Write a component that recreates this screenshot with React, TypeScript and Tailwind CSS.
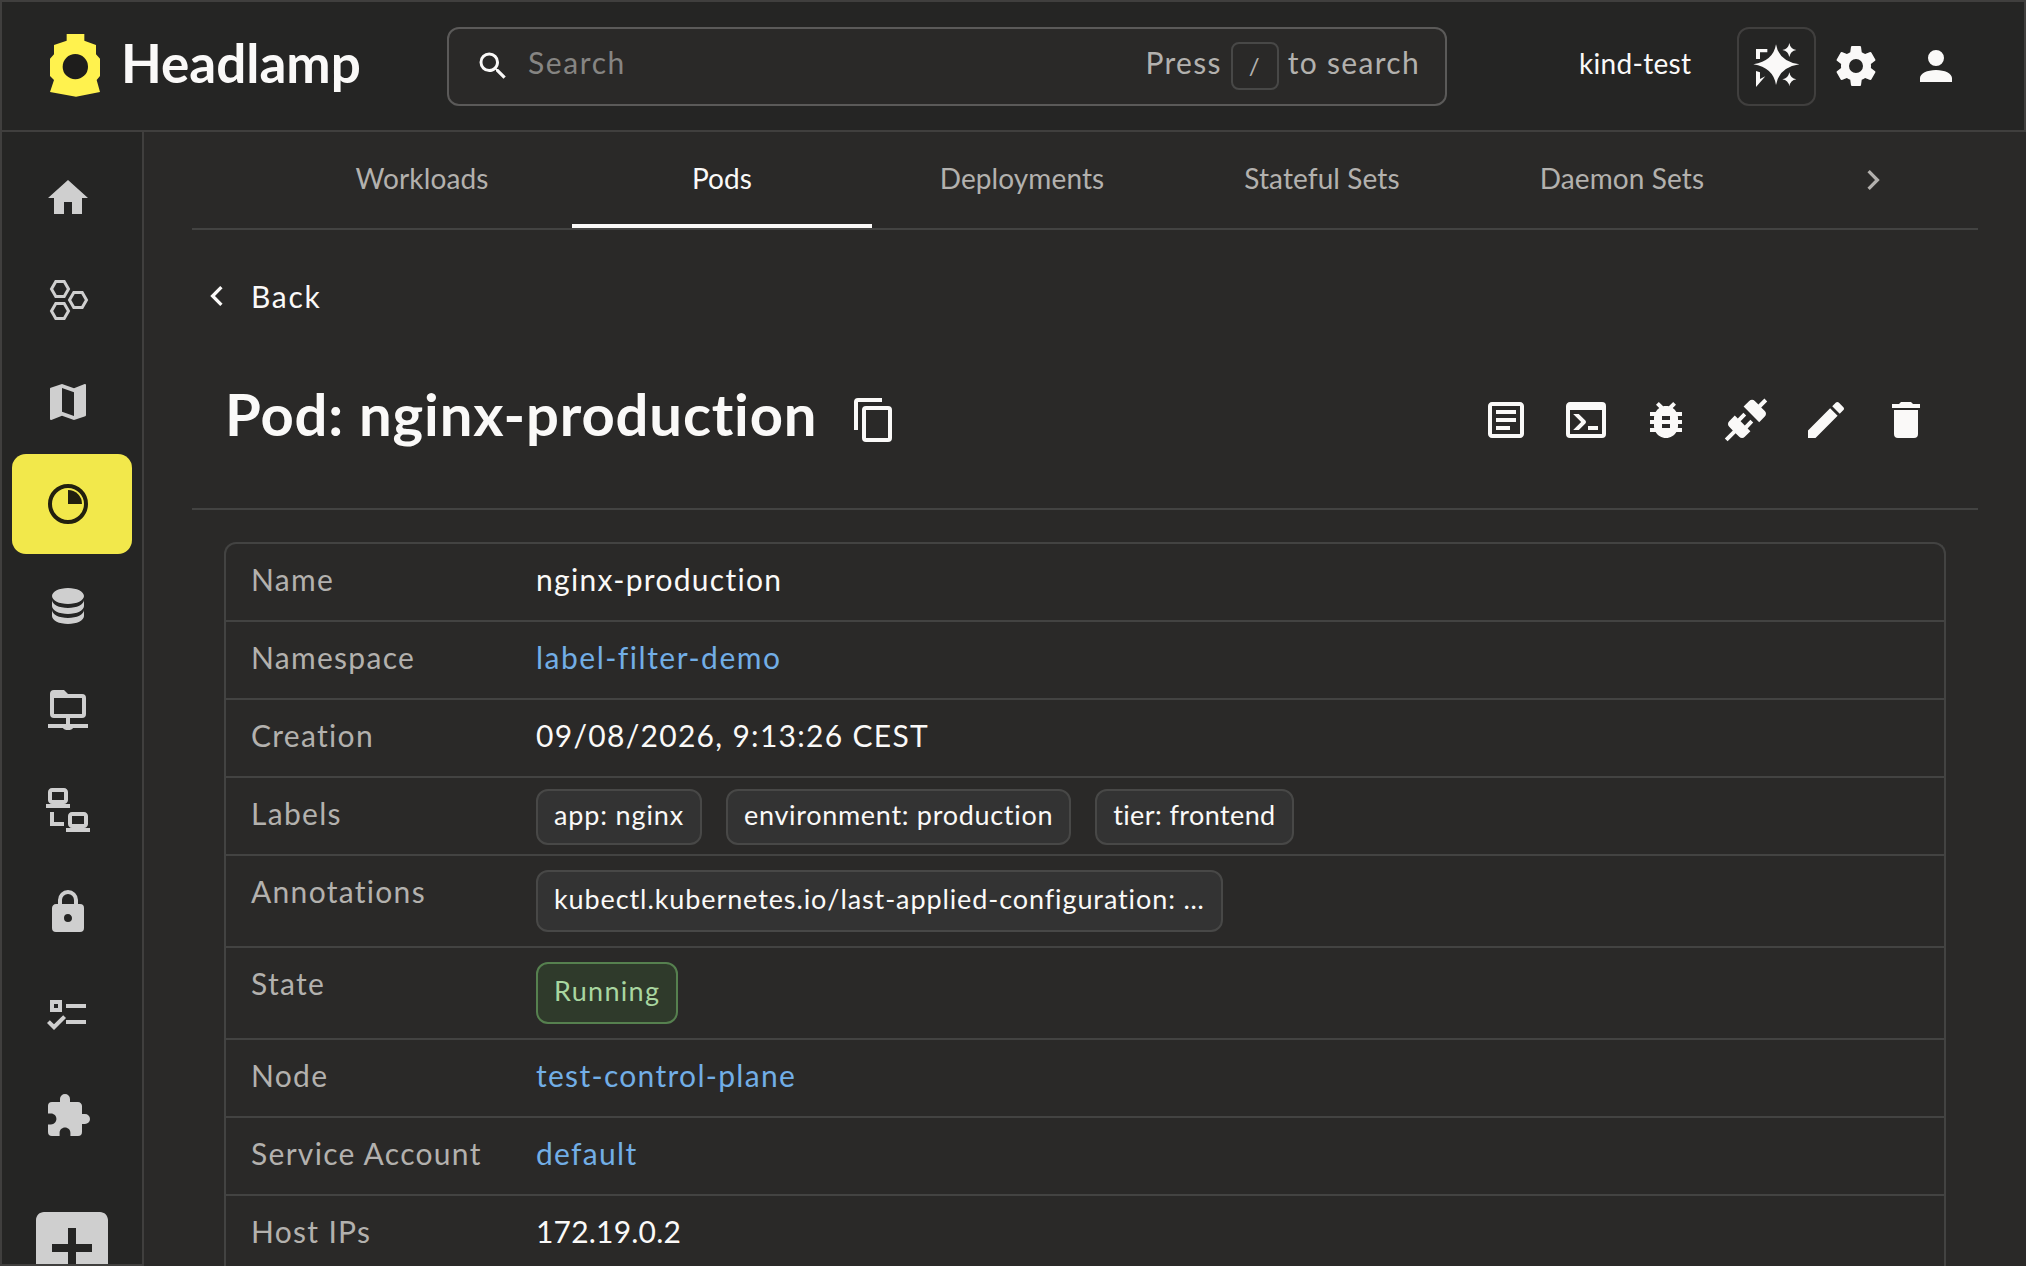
import React from "react";

const FONT = "font-['Lato','Noto_Sans',sans-serif]";

function Mdi({ d, className = "" }: { d: string; className?: string }) {
  return (
    <svg viewBox="0 0 24 24" className={`h-12 w-12 shrink-0 fill-current ${className}`}>
      <path d={d} />
    </svg>
  );
}

const ICONS = {
  home: "M10,20V14H14V20H19V12H22L12,3L2,12H5V20H10Z",
  map: "M15,19L9,16.89V5L15,7.11M20.5,3C20.44,3 20.39,3 20.34,3L15,5.1L9,3L3.36,4.9C3.15,4.97 3,5.15 3,5.38V20.5A0.5,0.5 0 0,0 3.5,21C3.55,21 3.61,21 3.66,20.97L9,18.9L15,21L20.64,19.1C20.85,19 21,18.85 21,18.62V3.5A0.5,0.5 0 0,0 20.5,3Z",
  database:
    "M12,3C7.58,3 4,4.79 4,7C4,9.21 7.58,11 12,11C16.42,11 20,9.21 20,7C20,4.79 16.42,3 12,3M4,9V12C4,14.21 7.58,16 12,16C16.42,16 20,14.21 20,12V9C20,11.21 16.42,13 12,13C7.58,13 4,11.21 4,9M4,14V17C4,19.21 7.58,21 12,21C16.42,21 20,19.21 20,17V14C20,16.21 16.42,18 12,18C7.58,18 4,16.21 4,14Z",
  lan: "M4,1C2.89,1 2,1.89 2,3V7C2,8.11 2.89,9 4,9H1V11H13V9H10C11.11,9 12,8.11 12,7V3C12,1.89 11.11,1 10,1H4M4,3H10V7H4V3M3,13V18L3,20H10V18H5V13H3M14,13C12.89,13 12,13.89 12,15V19C12,20.11 12.89,21 14,21H11V23H23V21H20C21.11,21 22,20.11 22,19V15C22,13.89 21.11,13 20,13H14M14,15H20V19H14V15Z",
  lock: "M12,17A2,2 0 0,0 14,15C14,13.89 13.1,13 12,13A2,2 0 0,0 10,15A2,2 0 0,0 12,17M18,8A2,2 0 0,1 20,10V20A2,2 0 0,1 18,22H6A2,2 0 0,1 4,20V10C4,8.89 4.9,8 6,8H7V6A5,5 0 0,1 12,1A5,5 0 0,1 17,6V8H18M12,3A3,3 0 0,0 9,6V8H15V6A3,3 0 0,0 12,3Z",
  checks: "M3,5H9V11H3V5M5,7V9H7V7H5M11,7H21V9H11V7M11,15H21V17H11V15M5,20L1.5,16.5L2.91,15.09L5,17.17L9.59,12.59L11,14L5,20Z",
  puzzle:
    "M20.5,11H19V7C19,5.89 18.1,5 17,5H13V3.5A2.5,2.5 0 0,0 10.5,1A2.5,2.5 0 0,0 8,3.5V5H4A2,2 0 0,0 2,7V10.8H3.5C5,10.8 6.2,12 6.2,13.5C6.2,15 5,16.2 3.5,16.2H2V20A2,2 0 0,0 4,22H7.8V20.5C7.8,19 9,17.8 10.5,17.8C12,17.8 13.2,19 13.2,20.5V22H17A2,2 0 0,0 19,20V16H20.5A2.5,2.5 0 0,0 23,13.5A2.5,2.5 0 0,0 20.5,11Z",
  plusBox: "M17,13H13V17H11V13H7V11H11V7H13V11H17M19,3H5C3.89,3 3,3.89 3,5V19A2,2 0 0,0 5,21H19A2,2 0 0,0 21,19V5C21,3.89 20.1,3 19,3Z",
  textBox: "M5,3C3.89,3 3,3.89 3,5V19C3,20.11 3.89,21 5,21H19C20.11,21 21,20.11 21,19V5C21,3.89 20.11,3 19,3H5M5,5H19V19H5V5M7,7V9H17V7H7M7,11V13H17V11H7M7,15V17H14V15H7Z",
  console: "M20,19V7H4V19H20M20,3A2,2 0 0,1 22,5V19A2,2 0 0,1 20,21H4A2,2 0 0,1 2,19V5C2,3.89 2.9,3 4,3H20M13,17V15H18V17H13M9.58,13L5.57,9H8.4L11.7,12.3C12.09,12.69 12.09,13.33 11.7,13.72L8.42,17H5.59L9.58,13Z",
  bug: "M14,12H10V10H14M14,16H10V14H14M20,8H17.19C16.74,7.22 16.12,6.55 15.37,6.04L17,4.41L15.59,3L13.42,5.17C12.96,5.06 12.5,5 12,5C11.5,5 11.04,5.06 10.59,5.17L8.41,3L7,4.41L8.62,6.04C7.88,6.55 7.26,7.22 6.81,8H4V10H6.09C6.04,10.33 6,10.66 6,11V12H4V14H6V15C6,15.34 6.04,15.67 6.09,16H4V18H6.81C7.85,19.79 9.78,21 12,21C14.22,21 16.15,19.79 17.19,18H20V16H17.91C17.96,15.67 18,15.34 18,15V14H20V12H18V11C18,10.66 17.96,10.33 17.91,10H20V8Z",
  connection:
    "M21.4 7.5C22.2 8.3 22.2 9.6 21.4 10.3L18.6 13.1L10.8 5.3L13.6 2.5C14.4 1.7 15.7 1.7 16.4 2.5L18.2 4.3L21.2 1.3L22.6 2.7L19.6 5.7L21.4 7.5M15.6 13.3L14.2 11.9L11.4 14.7L9.3 12.6L12.1 9.8L10.7 8.4L7.9 11.2L6.4 9.8L3.6 12.6C2.8 13.4 2.8 14.7 3.6 15.4L5.4 17.2L1.4 21.2L2.8 22.6L6.8 18.6L8.6 20.4C9.4 21.2 10.7 21.2 11.4 20.4L14.2 17.6L12.8 16.2L15.6 13.3Z",
  pencil: "M20.71,7.04C21.1,6.65 21.1,6 20.71,5.63L18.37,3.29C18,2.9 17.35,2.9 16.96,3.29L15.12,5.12L18.87,8.87M3,17.25V21H6.75L17.81,9.93L14.06,6.18L3,17.25Z",
  trash: "M19,4H15.5L14.5,3H9.5L8.5,4H5V6H19M6,19A2,2 0 0,0 8,21H16A2,2 0 0,0 18,19V7H6V19Z",
  copy: "M19,21H8V7H19M19,5H8A2,2 0 0,0 6,7V21A2,2 0 0,0 8,23H19A2,2 0 0,0 21,21V7A2,2 0 0,0 19,5M16,1H4A2,2 0 0,0 2,3V17H4V3H16V1Z",
  magnify:
    "M9.5,3A6.5,6.5 0 0,1 16,9.5C16,11.11 15.41,12.59 14.44,13.73L14.71,14H15.5L20.5,19L19,20.5L14,15.5V14.71L13.73,14.44C12.59,15.41 11.11,16 9.5,16A6.5,6.5 0 0,1 3,9.5A6.5,6.5 0 0,1 9.5,3M9.5,5C7,5 5,7 5,9.5C5,12 7,14 9.5,14C12,14 14,12 14,9.5C14,7 12,5 9.5,5Z",
  cog: "M12,15.5A3.5,3.5 0 0,1 8.5,12A3.5,3.5 0 0,1 12,8.5A3.5,3.5 0 0,1 15.5,12A3.5,3.5 0 0,1 12,15.5M19.43,12.97C19.47,12.65 19.5,12.33 19.5,12C19.5,11.67 19.47,11.34 19.43,11L21.54,9.37C21.73,9.22 21.78,8.95 21.66,8.73L19.66,5.27C19.54,5.05 19.27,4.96 19.05,5.05L16.56,6.05C16.04,5.66 15.5,5.32 14.87,5.07L14.5,2.42C14.46,2.18 14.25,2 14,2H10C9.75,2 9.54,2.18 9.5,2.42L9.13,5.07C8.5,5.32 7.96,5.66 7.44,6.05L4.95,5.05C4.73,4.96 4.46,5.05 4.34,5.27L2.34,8.73C2.21,8.95 2.27,9.22 2.46,9.37L4.57,11C4.53,11.34 4.5,11.67 4.5,12C4.5,12.33 4.53,12.65 4.57,12.97L2.46,14.63C2.27,14.78 2.21,15.05 2.34,15.27L4.34,18.73C4.46,18.95 4.73,19.03 4.95,18.95L7.44,17.94C7.96,18.34 8.5,18.68 9.13,18.93L9.5,21.58C9.54,21.82 9.75,22 10,22H14C14.25,22 14.46,21.82 14.5,21.58L14.87,18.93C15.5,18.67 16.04,18.34 16.56,17.94L19.05,18.95C19.27,19.03 19.54,18.95 19.66,18.73L21.66,15.27C21.78,15.05 21.73,14.78 21.54,14.63L19.43,12.97Z",
  account: "M12,4A4,4 0 0,1 16,8A4,4 0 0,1 12,12A4,4 0 0,1 8,8A4,4 0 0,1 12,4M12,14C16.42,14 20,15.79 20,18V20H4V18C4,15.79 7.58,14 12,14Z",
};

const HEX = "M-4.25 0 L-2.1 -3.75 L2.1 -3.75 L4.25 0 L2.1 3.75 L-2.1 3.75 Z";

function Hexagons() {
  return (
    <svg viewBox="0 0 24 24" className="h-12 w-12 fill-none stroke-current" strokeWidth="1.5">
      <path d={HEX} transform="translate(8 6.5)" />
      <path d={HEX} transform="translate(17 12)" />
      <path d={HEX} transform="translate(8 17.5)" />
    </svg>
  );
}

function PieSlice() {
  return (
    <svg viewBox="0 0 24 24" className="h-12 w-12">
      <circle cx="12" cy="12" r="9" fill="none" stroke="currentColor" strokeWidth="2" />
      <path d="M12 5 A7 7 0 0 1 19 12 H12 Z" fill="currentColor" />
    </svg>
  );
}

function FolderNetwork() {
  return (
    <svg viewBox="0 0 24 24" className="h-12 w-12 fill-current">
      <path
        fillRule="evenodd"
        d="M5 3H10L12 5H19A2 2 0 0 1 21 7V15A2 2 0 0 1 19 17H13V20H22V22H14.5A2.6 1.4 0 0 1 9.5 22H2V20H11V17H5A2 2 0 0 1 3 15V5A2 2 0 0 1 5 3ZM5 7V15H19V7Z"
      />
    </svg>
  );
}

function Sparkles() {
  return (
    <svg viewBox="0 0 186 186" className="h-[62px] w-[62px] fill-current">
      <path d="M90 28 Q98 78 160 88 Q98 98 90 150 Q82 98 22 88 Q82 78 90 28Z" />
      <path d="M130 24 Q133 42 151 45 Q133 48 130 66 Q127 48 109 45 Q127 42 130 24Z" />
      <path d="M130 112 Q133 130 151 133 Q133 136 130 154 Q127 136 109 133 Q127 130 130 112Z" />
      <path d="M30 42H64V52H42V72H30Z" />
      <path d="M30 108L42 112V132L58 124L30 156Z" />
    </svg>
  );
}

function Logo() {
  return (
    <svg viewBox="0 0 216 240" className="h-20 w-[72px] shrink-0">
      <path
        fill="#fff24e"
        d="M80 24H133V44L168 57V85L180 98V150L170 162L180 198L108 212L30 198L42 162L30 150V98L42 85V57L80 44Z"
      />
      <circle cx="106" cy="122" r="38" fill="#1e1d1c" />
    </svg>
  );
}

function Chevron({ left = false }: { left?: boolean }) {
  return (
    <svg viewBox="0 0 14 20" className="h-[22px] w-4 fill-none stroke-current" strokeWidth="3">
      <path d={left ? "M11 2 L3 10 L11 18" : "M3 2 L11 10 L3 18"} />
    </svg>
  );
}

const NAV: { key: string; node: React.ReactNode; active?: boolean }[] = [
  { key: "home", node: <Mdi d={ICONS.home} /> },
  { key: "cluster", node: <Hexagons /> },
  { key: "map", node: <Mdi d={ICONS.map} /> },
  { key: "workloads", node: <PieSlice />, active: true },
  { key: "storage", node: <Mdi d={ICONS.database} /> },
  { key: "network", node: <FolderNetwork /> },
  { key: "lan", node: <Mdi d={ICONS.lan} /> },
  { key: "security", node: <Mdi d={ICONS.lock} /> },
  { key: "config", node: <Mdi d={ICONS.checks} /> },
  { key: "plugins", node: <Mdi d={ICONS.puzzle} /> },
];

const TABS = ["Workloads", "Pods", "Deployments", "Stateful Sets", "Daemon Sets"];

function Chip({ children, className = "" }: { children: React.ReactNode; className?: string }) {
  return (
    <span
      className={`inline-flex items-center rounded-[12px] border-2 border-[#484847] bg-[#333333] px-4 pb-[4px] text-[27px] text-[#faf9f8] ${className}`}
    >
      {children}
    </span>
  );
}

function Row({ label, children, tall = false, last = false }: { label: string; children: React.ReactNode; tall?: boolean; last?: boolean }) {
  return (
    <div className={`flex ${tall ? "h-[92px]" : "h-[78px]"} ${last ? "" : "border-b-2 border-[#434342]"}`}>
      <div className="w-[310px] shrink-0 pl-[25px] pt-[15px] text-[30px] leading-[40px] tracking-[1.3px] text-[#b3b1ae]">{label}</div>
      <div className="min-w-0 flex-1 pt-[15px] text-[30px] leading-[40px] tracking-[1.3px] text-[#faf9f8]">{children}</div>
    </div>
  );
}

const LINK = "text-[#72aee6]";

export default function App() {
  return (
    <div className={`flex h-[1266px] w-[2026px] flex-col overflow-hidden bg-[#2a2928] ${FONT}`}>
      <header className="flex h-[132px] shrink-0 items-center border-2 border-[#403f3e] bg-[#252524] text-[#faf9f8]">
        <div className="flex w-[445px] shrink-0 items-center pl-[38px]">
          <Logo />
          <span className="mb-[7px] ml-[9px] text-[53px] font-bold leading-none">Headlamp</span>
        </div>
        <div className="flex h-[79px] w-[1000px] shrink-0 items-center rounded-[12px] border-2 border-[#5b5a59] bg-[#2a2928] pl-[26px] pr-[25px] text-[30px] tracking-[1.3px]">
          <svg viewBox="0 0 24 24" className="h-9 w-9 shrink-0 fill-current">
            <path d={ICONS.magnify} />
          </svg>
          <span className="ml-[17px] pb-[7px] tracking-[1.6px] text-[#868583]">Search</span>
          <span className="ml-auto pb-[7px] text-[#b3b1ae]">Press</span>
          <span className="mx-[9px] flex h-12 w-12 items-center justify-center rounded-[8px] border-2 border-[#484847] text-[24px] text-[#b3b1ae]">/</span>
          <span className="pb-[7px] text-[#b3b1ae]">to search</span>
        </div>
        <span className="ml-[132px] w-[158px] shrink-0 pb-[7px] text-[28px] tracking-[0.3px]">kind-test</span>
        <button className="flex h-[79px] w-[79px] shrink-0 items-center justify-center rounded-[12px] border-2 border-[#403f3e]">
          <Sparkles />
        </button>
        <Mdi d={ICONS.cog} className="ml-4" />
        <Mdi d={ICONS.account} className="ml-8" />
      </header>

      <div className="flex min-h-0 flex-1">
        <nav className="h-full w-[144px] shrink-0 overflow-hidden border-x-2 border-b-2 border-[#403f3e] bg-[#252524] px-[10px] pt-4 text-[#cfcfcf]">
          {NAV.map((item) => (
            <div
              key={item.key}
              className={`mb-[2px] flex h-[100px] w-[120px] items-center rounded-[14px] pl-[32px] ${
                item.active ? "bg-[#f2e84b] text-[#22200f]" : ""
              }`}
            >
              {item.node}
            </div>
          ))}
          <svg viewBox="0 0 24 24" className="ml-3 mt-[34px] h-24 w-24 fill-current">
            <path d={ICONS.plusBox} />
          </svg>
        </nav>

        <main className="min-w-0 flex-1 px-12 text-[#faf9f8]">
          <div className="flex h-[98px] items-stretch border-b-2 border-[#434342] pl-20 text-[28px] tracking-[0.1px]">
            {TABS.map((tab) => (
              <div
                key={tab}
                className={`flex w-[300px] items-center justify-center border-b-4 ${
                  tab === "Pods" ? "border-[#faf9f8] text-[#faf9f8]" : "border-transparent text-[#b3b1ae]"
                }`}
              >
                {tab}
              </div>
            ))}
            <div className="ml-[93px] flex items-center text-[#b3b1ae]">
              <Chevron />
            </div>
          </div>

          <div className="flex h-[78px] items-center pt-[54px] text-[30px] tracking-[1.7px]">
            <span className="ml-[17px] text-[#faf9f8]">
              <Chevron left />
            </span>
            <span className="ml-[26px]">Back</span>
          </div>

          <div className="flex h-[202px] items-center border-b-2 border-[#434342] pl-[33px] pr-[48px] pt-[24px]">
            <h1 className="mb-[12px] text-[58px] font-bold leading-none tracking-[0.85px]">Pod: nginx-production</h1>
            <Mdi d={ICONS.copy} className="ml-[33px]" />
            <div className="ml-auto flex gap-8">
              <Mdi d={ICONS.textBox} />
              <Mdi d={ICONS.console} />
              <Mdi d={ICONS.bug} />
              <Mdi d={ICONS.connection} />
              <Mdi d={ICONS.pencil} />
              <Mdi d={ICONS.trash} />
            </div>
          </div>

          <div className="mx-8 mt-8 rounded-t-[12px] border-x-2 border-t-2 border-[#434342]">
            <Row label="Name">nginx-production</Row>
            <Row label="Namespace">
              <span className={`${LINK} tracking-[1.5px]`}>label-filter-demo</span>
            </Row>
            <Row label="Creation">09/08/2026, 9:13:26 CEST</Row>
            <Row label="Labels">
              <div className="-mt-[4px] flex gap-6">
                <Chip className="h-14 tracking-[0.85px]">app: nginx</Chip>
                <Chip className="h-14 tracking-[0.7px]">environment: production</Chip>
                <Chip className="h-14 tracking-[0.4px]">tier: frontend</Chip>
              </div>
            </Row>
            <Row label="Annotations" tall>
              <div className="-mt-[1px] flex">
                <Chip className="h-[62px] tracking-[0.9px]">kubectl.kubernetes.io/last-applied-configuration: …</Chip>
              </div>
            </Row>
            <Row label="State" tall>
              <div className="-mt-[1px] flex">
                <Chip className="h-[62px] !border-[#56804f] !bg-[#2f3a2b] tracking-[1.3px] !text-[#a9d6a0]">Running</Chip>
              </div>
            </Row>
            <Row label="Node">
              <span className={LINK}>test-control-plane</span>
            </Row>
            <Row label="Service Account">
              <span className={LINK}>default</span>
            </Row>
            <Row label="Host IPs" last>
              <span className="tracking-[0.2px]">172.19.0.2</span>
            </Row>
          </div>
        </main>
      </div>
    </div>
  );
}
